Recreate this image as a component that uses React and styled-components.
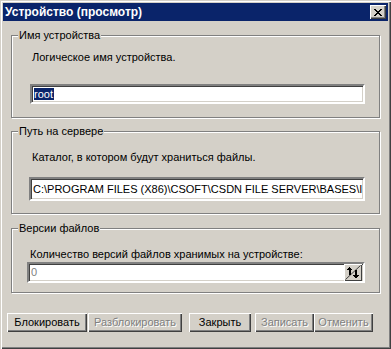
import React from 'react';
import styled, { createGlobalStyle } from 'styled-components';

const Global = createGlobalStyle`
  html, body { margin: 0; padding: 0; background: #D4D0C8; }
  body { font-family: "Liberation Sans", Arial, sans-serif; font-size: 11px; }
  * { box-sizing: border-box; }
`;

const Window = styled.div`
  width: 391px;
  height: 349px;
  padding: 3px;
  background: #D4D0C8;
  box-shadow: inset 1px 1px #D4D0C8, inset 2px 2px #fff, inset -1px -1px #404040, inset -2px -2px #808080;
  display: flex;
  flex-direction: column;
`;

const TitleBar = styled.div`
  height: 18px;
  background: #0A246A;
  display: flex;
  align-items: center;
  justify-content: space-between;
  padding: 0 2px;
`;

const TitleText = styled.span`
  color: #fff;
  font-weight: bold;
  font-size: 12px;
  line-height: 14px;
`;

const CloseButton = styled.div`
  width: 16px;
  height: 14px;
  background: #D4D0C8;
  box-shadow: inset 1px 1px #fff, inset -1px -1px #404040, inset -2px -2px #808080;
  display: flex;
  align-items: center;
  justify-content: center;
`;

const Group = styled.div`
  margin: ${(p) => p.$top}px 8px 0;
  height: ${(p) => p.$height}px;
  border: 1px solid #808080;
  box-shadow: 1px 1px 0 #fff, inset 1px 1px 0 #fff;
  display: flex;
  flex-direction: column;
  align-items: flex-start;
`;

const Caption = styled.div`
  margin: -7px 0 0 6px;
  padding: 0 1px;
  background: #D4D0C8;
  line-height: 13px;
  color: #000;
`;

const Label = styled.div`
  margin: ${(p) => p.$top}px 0 0 ${(p) => p.$left}px;
  line-height: 13px;
  color: #000;
`;

const Field = styled.div`
  margin: ${(p) => p.$top}px 0 0 ${(p) => p.$left}px;
  width: ${(p) => p.$width}px;
  height: ${(p) => p.$height}px;
  background: #fff;
  border: 2px solid;
  border-color: #808080 #fff #fff #808080;
  box-shadow: inset 1px 1px #404040, inset -1px -1px #D4D0C8;
  display: flex;
  align-items: center;
  padding: 0 1px 0 2px;
  overflow: hidden;
  white-space: nowrap;
  line-height: 13px;
  color: ${(p) => (p.$disabled ? '#808080' : '#000')};
`;

const FieldText = styled.span`
  flex: 1;
  overflow: hidden;
`;

const Selected = styled.span`
  background: #0A246A;
  color: #fff;
  padding: 0 1px 0 0;
`;

const SpinButton = styled.div`
  width: 18px;
  height: 17px;
  flex: none;
  background: #D4D0C8;
  box-shadow: inset 1px 1px #fff, inset -1px -1px #404040;
  display: flex;
`;

const ButtonRow = styled.div`
  margin-top: 20px;
  padding-left: 4px;
  display: flex;
`;

const Button = styled.div`
  width: ${(p) => p.$width}px;
  height: 19px;
  margin-left: ${(p) => p.$gap}px;
  background: #D4D0C8;
  box-shadow: inset 1px 1px #fff, inset -1px -1px #404040, inset -2px -2px #808080;
  display: flex;
  align-items: center;
  justify-content: center;
  line-height: 13px;
  color: ${(p) => (p.$disabled ? '#808080' : '#000')};
  text-shadow: ${(p) => (p.$disabled ? '1px 1px 0 #fff' : 'none')};
`;

const CloseIcon = () => (
  <svg width="8" height="7" viewBox="0 0 8 7" shapeRendering="crispEdges">
    <path d="M0 0h2v1H0zM6 0h2v1H6zM1 1h2v1H1zM5 1h2v1H5zM2 2h4v1H2zM3 3h2v1H3zM2 4h4v1H2zM1 5h2v1H1zM5 5h2v1H5zM0 6h2v1H0zM6 6h2v1H6z" fill="#000" />
  </svg>
);

const SpinIcon = () => (
  <svg width="18" height="17" viewBox="0 0 18 17" shapeRendering="crispEdges">
    <line x1="1.5" y1="15.5" x2="16.5" y2="1.5" stroke="#404040" strokeWidth="1" shapeRendering="auto" />
    <path d="M5 3h1v1H5zM4 4h3v1H4zM3 5h5v1H3zM5 6h1v5H5zM6 6h1v5H6z" fill="#000" />
    <path d="M11 6h2v5h-2zM9 11h6v1H9zM10 12h4v1h-4zM11 13h2v1h-2z" fill="#000" />
  </svg>
);

export default function App() {
  return (
    <>
      <Global />
      <Window>
        <TitleBar>
          <TitleText>Устройство (просмотр)</TitleText>
          <CloseButton>
            <CloseIcon />
          </CloseButton>
        </TitleBar>

        <Group $top={14} $height={83}>
          <Caption>Имя устройства</Caption>
          <Label $top={9} $left={20}>Логическое имя устройства.</Label>
          <Field $top={20} $left={18} $width={335} $height={20}>
            <FieldText>
              <Selected>root</Selected>
            </FieldText>
          </Field>
        </Group>

        <Group $top={13} $height={83}>
          <Caption>Путь на сервере</Caption>
          <Label $top={13} $left={20}>Каталог, в котором будут храниться файлы.</Label>
          <Field $top={13} $left={17} $width={336} $height={24}>
            <FieldText>C:\PROGRAM FILES (X86)\CSOFT\CSDN FILE SERVER\BASES\INBOX</FieldText>
          </Field>
        </Group>

        <Group $top={14} $height={65}>
          <Caption>Версии файлов</Caption>
          <Label $top={13} $left={18}>Количество версий файлов хранимых на устройстве:</Label>
          <Field $top={1} $left={15} $width={338} $height={21} $disabled>
            <FieldText>0</FieldText>
            <SpinButton>
              <SpinIcon />
            </SpinButton>
          </Field>
        </Group>

        <ButtonRow>
          <Button $width={80} $gap={0}>Блокировать</Button>
          <Button $width={94} $gap={1} $disabled>Разблокировать</Button>
          <Button $width={62} $gap={7}>Закрыть</Button>
          <Button $width={59} $gap={4} $disabled>Записать</Button>
          <Button $width={59} $gap={0} $disabled>Отменить</Button>
        </ButtonRow>
      </Window>
    </>
  );
}
